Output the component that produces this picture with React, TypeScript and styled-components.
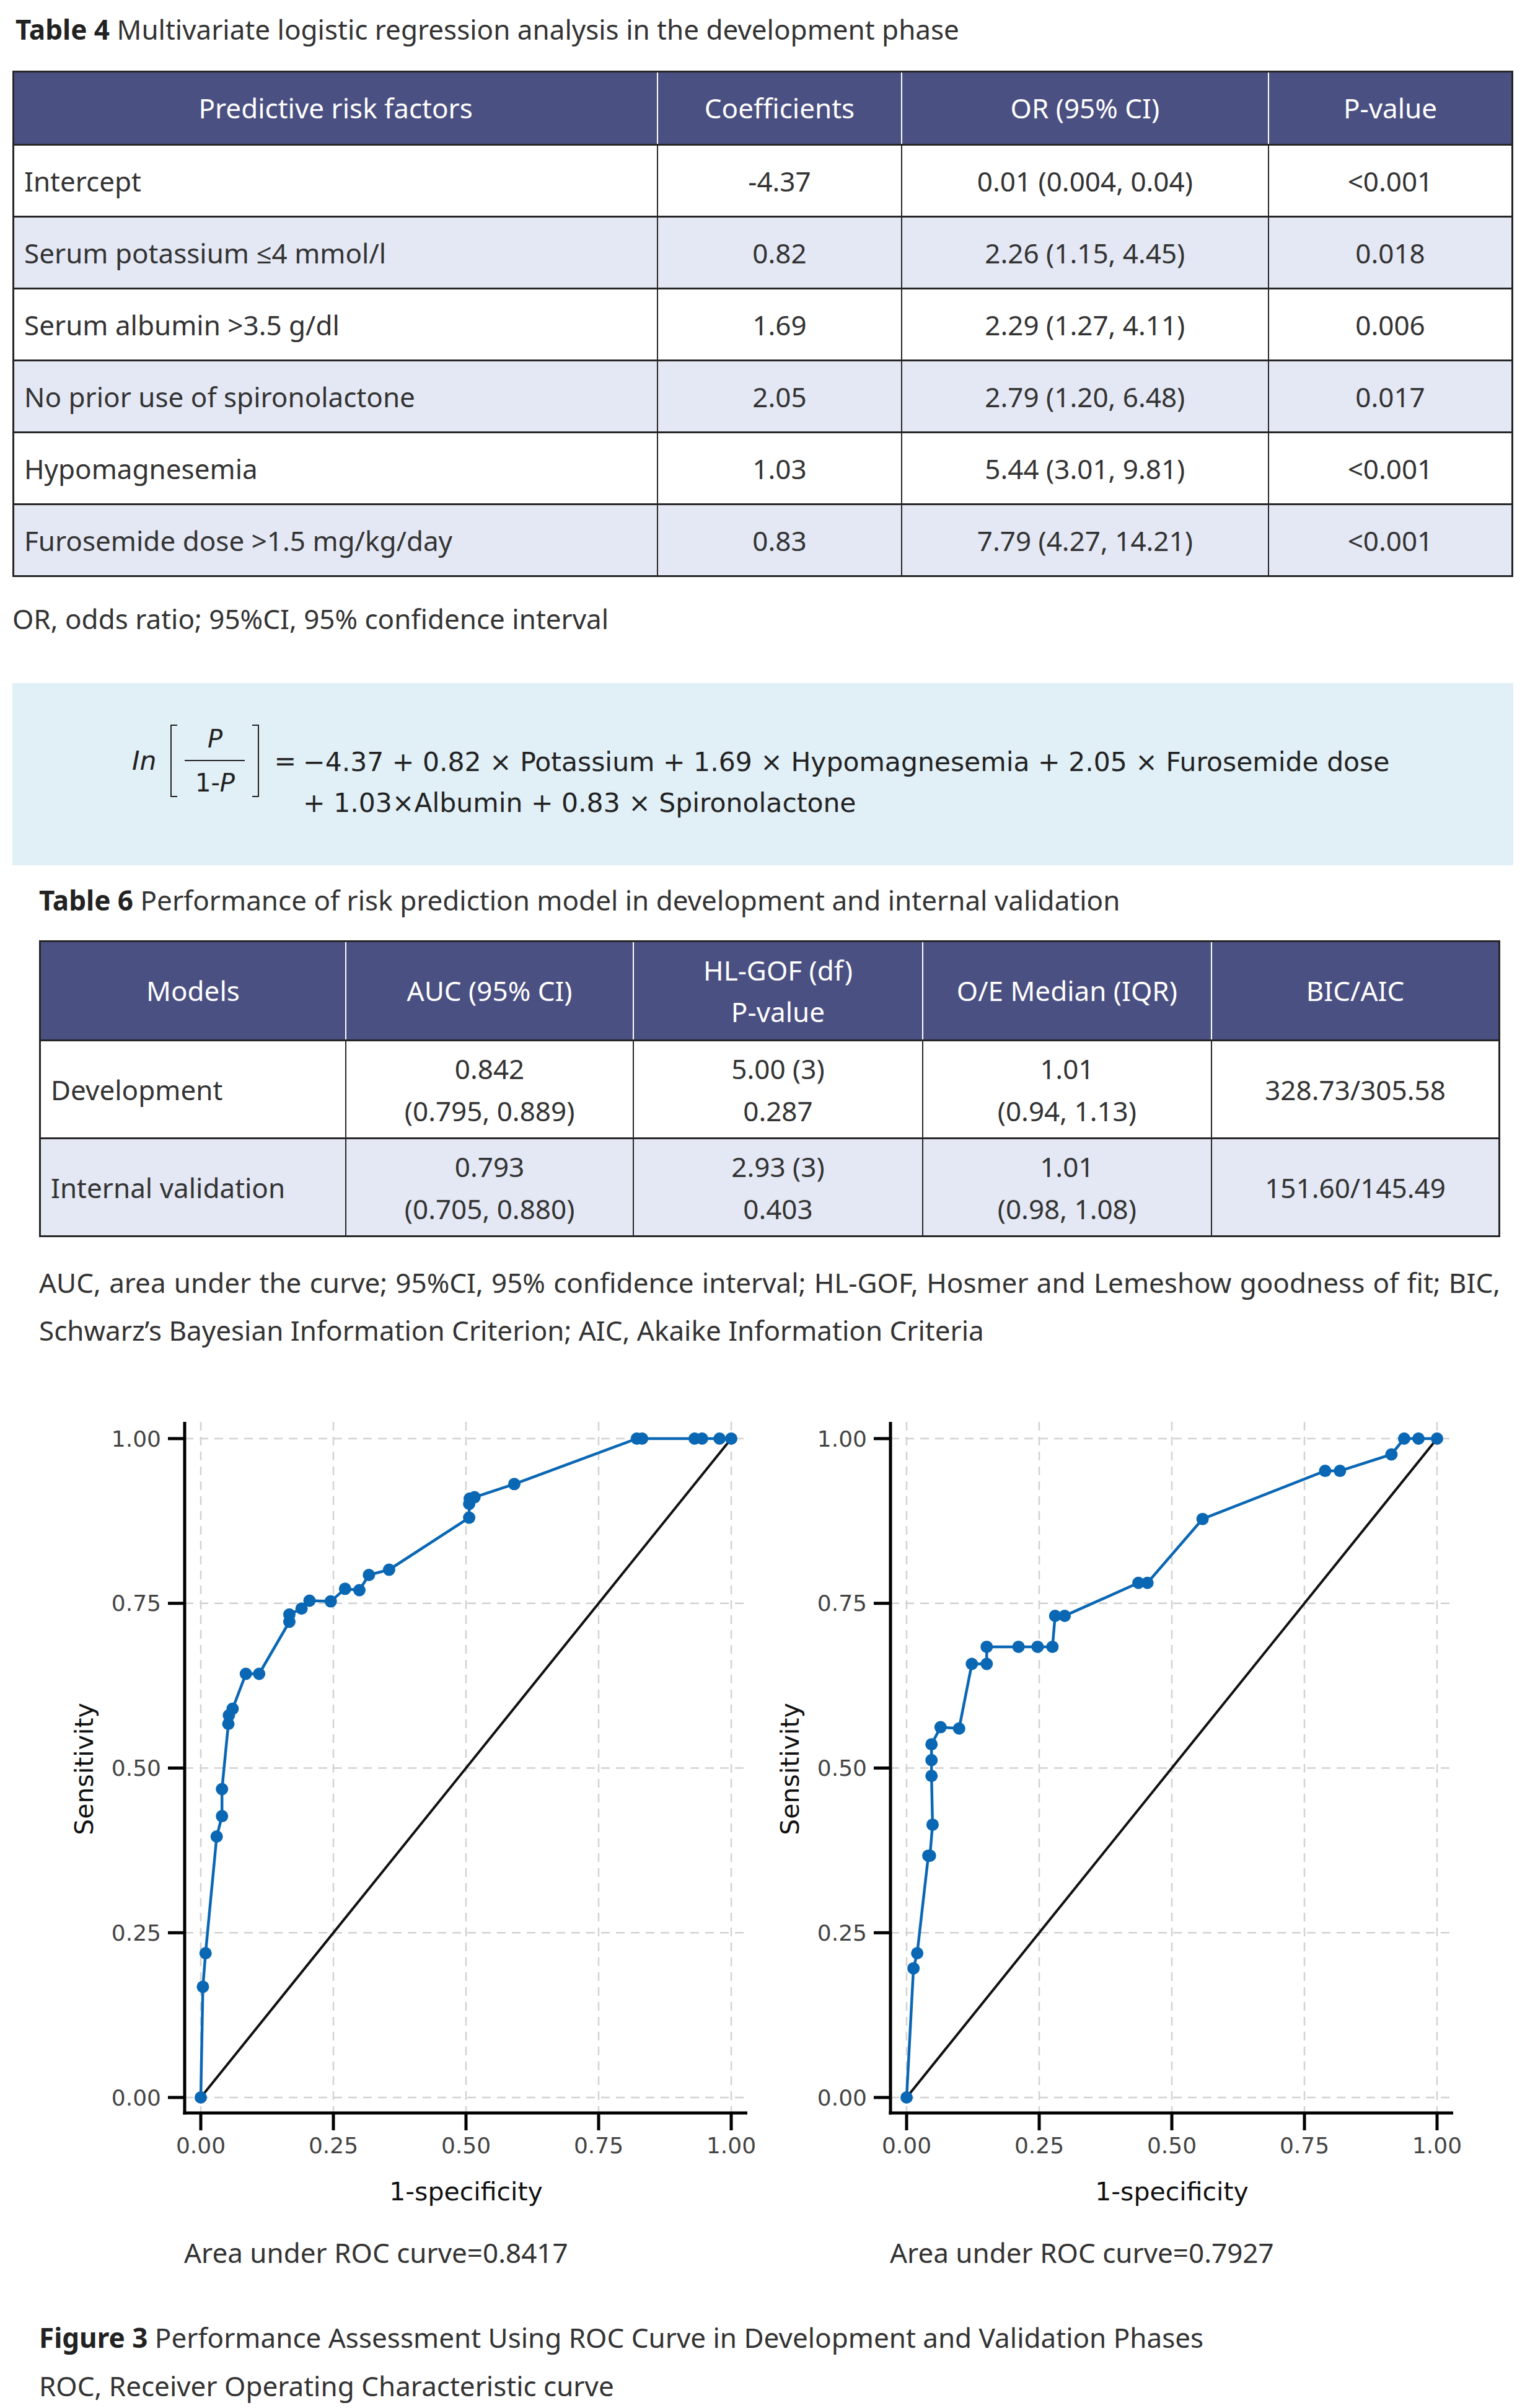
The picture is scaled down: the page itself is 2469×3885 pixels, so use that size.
import React from "react";
import styled, { createGlobalStyle } from "styled-components";

const GlobalStyle = createGlobalStyle`
  html, body { margin: 0; padding: 0; background: #ffffff; }
  body { font-family: "Noto Sans", "Open Sans", sans-serif; color: #333333; }
`;

const HEAD_BG = "#4b5082";
const ALT_BG = "#e4e8f4";
const LINE = "#262626";
const BLUE = "#0a67b4";

const Page = styled.div`
  width: 2469px;
  padding: 17px 0 40px;
  box-sizing: border-box;
`;

const Caption = styled.p<{ $x: number; $mt?: number }>`
  margin: ${(p) => p.$mt ?? 0}px 0 0 ${(p) => p.$x}px;
  font-size: 44px;
  line-height: 60px;
  color: #333333;
  white-space: nowrap;
`;

const Label = styled.span`
  font-weight: 700;
  color: #222222;
`;

const Table = styled.table<{ $x: number; $w: number; $mt: number }>`
  margin: ${(p) => p.$mt}px 0 0 ${(p) => p.$x}px;
  width: ${(p) => p.$w}px;
  border-collapse: collapse;
  table-layout: fixed;
  border: 3px solid ${LINE};
  font-size: 44px;
  color: #333333;
`;

const Col = styled.col<{ $pct: number }>`
  width: ${(p) => p.$pct}%;
`;

const HeadRow = styled.tr<{ $h: number }>`
  height: ${(p) => p.$h}px;
`;

const HeadCell = styled.th`
  background: ${HEAD_BG};
  color: #ffffff;
  font-weight: 400;
  text-align: center;
  vertical-align: middle;
  line-height: 67px;
  padding: 0 10px;
  border-left: 2px solid #ffffff;
  border-bottom: 3px solid ${LINE};
  &:first-child {
    border-left: 3px solid ${LINE};
  }
`;

const BodyRow = styled.tr<{ $h: number; $alt: boolean }>`
  height: ${(p) => p.$h}px;
  background: ${(p) => (p.$alt ? ALT_BG : "#ffffff")};
`;

const Cell = styled.td<{ $first?: boolean }>`
  text-align: ${(p) => (p.$first ? "left" : "center")};
  vertical-align: middle;
  padding: 0 10px 0 ${(p) => (p.$first ? 16 : 10)}px;
  line-height: 68px;
  border: 2px solid ${LINE};
  border-top: 3px solid ${LINE};
  white-space: nowrap;
`;

const Note = styled.p<{ $x: number; $mt: number }>`
  margin: ${(p) => p.$mt}px 0 0 ${(p) => p.$x}px;
  font-size: 44px;
  line-height: 60px;
  color: #333333;
  white-space: nowrap;
`;

const FormulaBox = styled.div`
  margin: 74px 0 0 20px;
  width: 2422px;
  height: 294px;
  box-sizing: border-box;
  background: #e1eff6;
  padding: 67px 0 0 193px;
  display: flex;
  align-items: flex-start;
  font-family: "DejaVu Sans", "Noto Sans", sans-serif;
  font-size: 42.5px;
  color: #222222;
`;

const LeftGroup = styled.div`
  display: flex;
  align-items: center;
`;

const Italic = styled.span`
  font-style: italic;
`;

const Ln = styled(Italic)`
  margin-right: 23px;
`;

const BracketSide = styled.span<{ $side: "left" | "right" }>`
  width: 9px;
  height: 113px;
  border: 2px solid #222222;
  border-${(p) => (p.$side === "left" ? "right" : "left")}: none;
`;

const Fraction = styled.div`
  width: 121px;
  box-sizing: border-box;
  padding: 0 12px;
  display: flex;
  flex-direction: column;
  align-items: center;
  font-size: 40px;
`;

const FracPart = styled.span`
  line-height: 44px;
`;

const FracBar = styled.span`
  align-self: stretch;
  height: 2px;
  margin: 12px 0 13px;
  background: #222222;
`;

const Equals = styled.span`
  margin: 0 11px 0 24px;
`;

const FormulaLines = styled.div`
  padding-top: 28px;
  display: flex;
  flex-direction: column;
  line-height: 66px;
  white-space: nowrap;
`;

const JustLine = styled.p<{ $mt?: number; $justify?: boolean }>`
  margin: ${(p) => p.$mt ?? 0}px 0 0 63px;
  width: 2358px;
  font-size: 44px;
  line-height: 77px;
  color: #333333;
  white-space: nowrap;
  text-align: ${(p) => (p.$justify ? "justify" : "left")};
  text-align-last: ${(p) => (p.$justify ? "justify" : "left")};
`;

const ChartsRow = styled.div`
  margin-top: 63px;
  padding-left: 100px;
  display: flex;
  gap: 9px;
`;

const ChartColumn = styled.div`
  width: 1130px;
  display: flex;
  flex-direction: column;
`;

const ChartSvg = styled.svg`
  display: block;
  font-family: "DejaVu Sans", sans-serif;
`;

const AucText = styled.p`
  margin: 36px 0 0 197px;
  font-size: 44px;
  line-height: 60px;
  color: #333333;
  white-space: nowrap;
`;

const FigureCaption = styled.div`
  margin: 68px 0 0 63px;
  font-size: 44px;
  line-height: 78px;
  color: #333333;
  white-space: nowrap;
`;

/* ---------- chart ---------- */
const X0 = 224;
const XS = 856;
const Y0 = 1136;
const YS = 1063;
const px = (f: number) => X0 + f * XS;
const py = (t: number) => Y0 - t * YS;
const TICKS = [0, 0.25, 0.5, 0.75, 1];
const AXIS_LEFT = 198;
const AXIS_BOTTOM = 1161;
const AXIS_TOP = 46;
const AXIS_RIGHT = 1106;

type Pt = [number, number];

const devPoints: Pt[] = [
  [0, 0], [0.004, 0.168], [0.009, 0.219], [0.03, 0.396], [0.04, 0.427], [0.04, 0.468],
  [0.052, 0.567], [0.053, 0.58], [0.06, 0.59], [0.085, 0.643], [0.11, 0.643],
  [0.167, 0.722], [0.167, 0.733], [0.19, 0.742], [0.205, 0.754], [0.245, 0.753],
  [0.272, 0.772], [0.299, 0.77], [0.317, 0.793], [0.355, 0.801], [0.506, 0.88],
  [0.506, 0.901], [0.507, 0.909], [0.516, 0.911], [0.591, 0.931], [0.822, 1],
  [0.832, 1], [0.931, 1], [0.945, 1], [0.978, 1], [1, 1],
];

const valPoints: Pt[] = [
  [0, 0], [0.013, 0.196], [0.02, 0.219], [0.041, 0.367], [0.044, 0.367], [0.049, 0.414],
  [0.047, 0.488], [0.047, 0.512], [0.047, 0.536], [0.064, 0.562], [0.099, 0.56],
  [0.123, 0.658], [0.151, 0.658], [0.151, 0.684], [0.211, 0.684], [0.247, 0.684],
  [0.275, 0.684], [0.28, 0.731], [0.298, 0.731], [0.437, 0.781], [0.454, 0.781],
  [0.558, 0.878], [0.789, 0.951], [0.817, 0.951], [0.914, 0.976], [0.938, 1],
  [0.965, 1], [1, 1],
];

function RocChart({ points }: { points: Pt[] }) {
  const d = points
    .map(([f, t], i) => `${i ? "L" : "M"}${px(f).toFixed(1)} ${py(t).toFixed(1)}`)
    .join(" ");
  return (
    <ChartSvg width={1130} height={1320} viewBox="0 0 1130 1320">
      {TICKS.map((t) => (
        <line key={"gv" + t} x1={px(t)} x2={px(t)} y1={AXIS_TOP} y2={AXIS_BOTTOM}
          stroke="#d2d2d2" strokeWidth={2.5} strokeDasharray="14 10" />
      ))}
      {TICKS.map((t) => (
        <line key={"gh" + t} x1={AXIS_LEFT} x2={AXIS_RIGHT} y1={py(t)} y2={py(t)}
          stroke="#d2d2d2" strokeWidth={2.5} strokeDasharray="14 10" />
      ))}
      <line x1={px(0)} y1={py(0)} x2={px(1)} y2={py(1)} stroke="#111111" strokeWidth={4} />
      <path d={d} fill="none" stroke={BLUE} strokeWidth={4.5} strokeLinejoin="round" />
      {points.map(([f, t], i) => (
        <circle key={i} cx={px(f)} cy={py(t)} r={10} fill={BLUE} />
      ))}
      <line x1={AXIS_LEFT} y1={AXIS_TOP} x2={AXIS_LEFT} y2={AXIS_BOTTOM + 2.5} stroke="#000" strokeWidth={5} />
      <line x1={AXIS_LEFT - 2.5} y1={AXIS_BOTTOM} x2={AXIS_RIGHT} y2={AXIS_BOTTOM} stroke="#000" strokeWidth={5} />
      {TICKS.map((t) => (
        <line key={"ty" + t} x1={AXIS_LEFT - 27} x2={AXIS_LEFT} y1={py(t)} y2={py(t)} stroke="#000" strokeWidth={5} />
      ))}
      {TICKS.map((t) => (
        <line key={"tx" + t} x1={px(t)} x2={px(t)} y1={AXIS_BOTTOM} y2={AXIS_BOTTOM + 28} stroke="#000" strokeWidth={5} />
      ))}
      {TICKS.map((t) => (
        <text key={"ly" + t} x={160} y={py(t)} fontSize={36} fill="#444" textAnchor="end" dominantBaseline="central">
          {t.toFixed(2)}
        </text>
      ))}
      {TICKS.map((t) => (
        <text key={"lx" + t} x={px(t)} y={1213} fontSize={36} fill="#444" textAnchor="middle" dominantBaseline="central">
          {t.toFixed(2)}
        </text>
      ))}
      <text x={36} y={606} fontSize={41} fill="#111" textAnchor="middle" dominantBaseline="central"
        transform="rotate(-90 36 606)">
        Sensitivity
      </text>
      <text x={(px(0) + px(1)) / 2} y={1288} fontSize={41} fill="#111" textAnchor="middle" dominantBaseline="central">
        1-specificity
      </text>
    </ChartSvg>
  );
}

/* ---------- data ---------- */
const t4Cols = [1041, 394, 593, 394];
const t4Head = ["Predictive risk factors", "Coefficients", "OR (95% CI)", "P-value"];
const t4Rows: string[][] = [
  ["Intercept", "-4.37", "0.01 (0.004, 0.04)", "<0.001"],
  ["Serum potassium \u22644 mmol/l", "0.82", "2.26 (1.15, 4.45)", "0.018"],
  ["Serum albumin >3.5 g/dl", "1.69", "2.29 (1.27, 4.11)", "0.006"],
  ["No prior use of spironolactone", "2.05", "2.79 (1.20, 6.48)", "0.017"],
  ["Hypomagnesemia", "1.03", "5.44 (3.01, 9.81)", "<0.001"],
  ["Furosemide dose >1.5 mg/kg/day", "0.83", "7.79 (4.27, 14.21)", "<0.001"],
];

const t6Cols = [494, 465, 467, 467, 465];
const t6Head: string[][] = [
  ["Models"],
  ["AUC (95% CI)"],
  ["HL-GOF (df)", "P-value"],
  ["O/E Median (IQR)"],
  ["BIC/AIC"],
];
const t6Rows: string[][][] = [
  [["Development"], ["0.842", "(0.795, 0.889)"], ["5.00 (3)", "0.287"], ["1.01", "(0.94, 1.13)"], ["328.73/305.58"]],
  [["Internal validation"], ["0.793", "(0.705, 0.880)"], ["2.93 (3)", "0.403"], ["1.01", "(0.98, 1.08)"], ["151.60/145.49"]],
];

const Lines = ({ parts }: { parts: string[] }) => (
  <>
    {parts.map((p, i) => (
      <React.Fragment key={i}>
        {i > 0 && <br />}
        {p}
      </React.Fragment>
    ))}
  </>
);

const ColGroup = ({ widths }: { widths: number[] }) => {
  const total = widths.reduce((a, b) => a + b, 0);
  return (
    <colgroup>
      {widths.map((w, i) => (
        <Col key={i} $pct={(w / total) * 100} />
      ))}
    </colgroup>
  );
};

export default function App() {
  return (
    <Page>
      <GlobalStyle />
      <Caption $x={25}>
        <Label>Table 4</Label> Multivariate logistic regression analysis in the development phase
      </Caption>

      <Table $x={20} $w={2422} $mt={37}>
        <ColGroup widths={t4Cols} />
        <thead>
          <HeadRow $h={118}>
            {t4Head.map((h) => (
              <HeadCell key={h}>{h}</HeadCell>
            ))}
          </HeadRow>
        </thead>
        <tbody>
          {t4Rows.map((r, ri) => (
            <BodyRow key={ri} $h={116} $alt={ri % 2 === 1}>
              {r.map((c, ci) => (
                <Cell key={ci} $first={ci === 0}>{c}</Cell>
              ))}
            </BodyRow>
          ))}
        </tbody>
      </Table>

      <Note $x={20} $mt={37}>OR, odds ratio; 95%CI, 95% confidence interval</Note>

      <FormulaBox>
        <LeftGroup>
          <Ln>In</Ln>
          <BracketSide $side="left" />
          <Fraction>
            <FracPart><Italic>P</Italic></FracPart>
            <FracBar />
            <FracPart>1-<Italic>P</Italic></FracPart>
          </Fraction>
          <BracketSide $side="right" />
          <Equals>=</Equals>
        </LeftGroup>
        <FormulaLines>
          <span>{"\u22124.37 + 0.82 \u00d7 Potassium + 1.69 \u00d7 Hypomagnesemia + 2.05 \u00d7 Furosemide dose"}</span>
          <span>{"+ 1.03\u00d7Albumin + 0.83 \u00d7 Spironolactone"}</span>
        </FormulaLines>
      </FormulaBox>

      <Caption $x={63} $mt={26}>
        <Label>Table 6</Label> Performance of risk prediction model in development and internal validation
      </Caption>

      <Table $x={63} $w={2358} $mt={35}>
        <ColGroup widths={t6Cols} />
        <thead>
          <HeadRow $h={160}>
            {t6Head.map((h, i) => (
              <HeadCell key={i}><Lines parts={h} /></HeadCell>
            ))}
          </HeadRow>
        </thead>
        <tbody>
          {t6Rows.map((r, ri) => (
            <BodyRow key={ri} $h={158} $alt={ri % 2 === 1}>
              {r.map((c, ci) => (
                <Cell key={ci} $first={ci === 0}><Lines parts={c} /></Cell>
              ))}
            </BodyRow>
          ))}
        </tbody>
      </Table>

      <JustLine $mt={35} $justify>
        AUC, area under the curve; 95%CI, 95% confidence interval; HL-GOF, Hosmer and Lemeshow goodness of fit; BIC,
      </JustLine>
      <JustLine>{"Schwarz\u2019s Bayesian Information Criterion; AIC, Akaike Information Criteria"}</JustLine>

      <ChartsRow>
        <ChartColumn>
          <RocChart points={devPoints} />
          <AucText>Area under ROC curve=0.8417</AucText>
        </ChartColumn>
        <ChartColumn>
          <RocChart points={valPoints} />
          <AucText>Area under ROC curve=0.7927</AucText>
        </ChartColumn>
      </ChartsRow>

      <FigureCaption>
        <Label>Figure 3</Label> Performance Assessment Using ROC Curve in Development and Validation Phases
        <br />
        ROC, Receiver Operating Characteristic curve
      </FigureCaption>
    </Page>
  );
}
